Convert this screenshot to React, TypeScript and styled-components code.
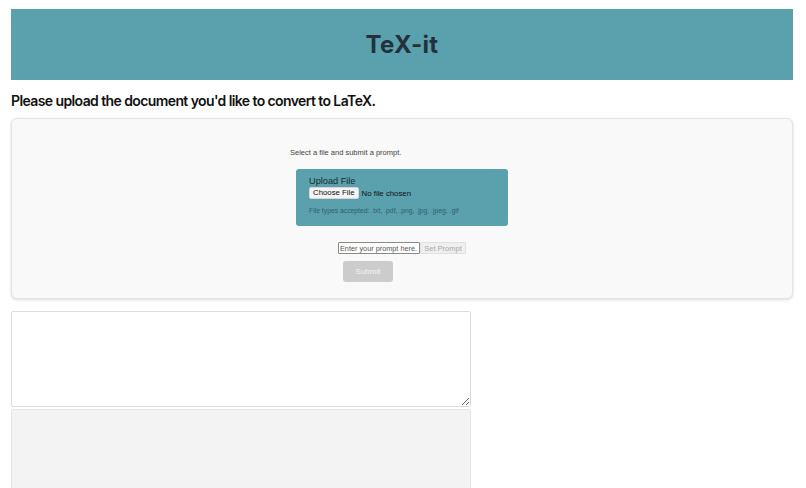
import React from 'react';
import styled, { createGlobalStyle } from 'styled-components';

const GlobalStyle = createGlobalStyle`
  html, body {
    margin: 0;
    padding: 0;
    overflow: hidden;
    background: #ffffff;
    font-family: Inter, "Liberation Sans", Arial, sans-serif;
  }
`;

const Page = styled.div`
  padding: 9px 13px 0 11px;
`;

const Header = styled.header`
  height: 71px;
  background-color: #5aa1ad;
  display: flex;
  align-items: center;
  justify-content: center;
`;

const Title = styled.h1`
  margin: 0;
  font-size: 24px;
  font-weight: 700;
  letter-spacing: 0.3px;
  color: #24313c;
`;

const Prompt = styled.h2`
  margin: 12px 0 8px;
  font-size: 14px;
  font-weight: 600;
  letter-spacing: -0.6px;
  line-height: 18px;
  color: #111111;
`;

const Card = styled.section`
  height: 181px;
  box-sizing: border-box;
  background: #f9f9f9;
  border: 1px solid #e3e3e3;
  border-radius: 6px;
  box-shadow: 0 1px 3px rgba(0, 0, 0, 0.14);
  display: flex;
  justify-content: center;
  padding-top: 29px;
`;

const Inner = styled.div`
  width: 224px;
  display: flex;
  flex-direction: column;
`;

const Hint = styled.p`
  margin: 0 0 11px;
  font-family: "Liberation Sans", Arial, sans-serif;
  font-size: 7.5px;
  line-height: 10px;
  color: #444444;
`;

const UploadBox = styled.div`
  margin: 0 6px;
  height: 57px;
  box-sizing: border-box;
  background: #5aa1ad;
  border-radius: 3px;
  padding: 7px 13px 0;
  font-family: "Liberation Sans", Arial, sans-serif;
`;

const UploadLabel = styled.label`
  display: block;
  font-size: 9.2px;
  line-height: 11px;
  color: #1b2a33;
`;

const FileRow = styled.div`
  display: flex;
  align-items: center;
  gap: 3px;
  font-size: 7.8px;
  color: #111111;
`;

const FakeButton = styled.span`
  display: inline-block;
  background: #f4f4f4;
  border: 1px solid #d6d6d6;
  border-radius: 2px;
  padding: 0 3px;
  font-size: 7.8px;
  line-height: 10px;
  color: #111111;
`;

const Accepted = styled.p`
  margin: 8px 0 0;
  font-size: 6.8px;
  line-height: 8px;
  color: #33606a;
`;

const PromptRow = styled.div`
  margin-top: 16px;
  display: flex;
  justify-content: center;
  align-items: center;
`;

const PromptInput = styled.input`
  width: 82px;
  height: 12px;
  box-sizing: border-box;
  padding: 0 1px;
  border: 1px solid #8a8a8a;
  border-radius: 1px;
  font-family: "Liberation Sans", Arial, sans-serif;
  font-size: 7.3px;
  color: #333;
  background: #ffffff;
  &::placeholder {
    color: #555555;
  }
`;

const SetButton = styled.button`
  height: 12px;
  width: 46px;
  box-sizing: border-box;
  padding: 0;
  border: 1px solid #e0e0e0;
  border-radius: 1px;
  background: #efefef;
  font-family: "Liberation Sans", Arial, sans-serif;
  font-size: 7.5px;
  color: #a9a9a9;
`;

const SubmitRow = styled.div`
  margin-top: 4px;
  padding-left: 53px;
`;

const SubmitButton = styled.button`
  width: 50px;
  height: 21px;
  border: none;
  border-radius: 3px;
  background: #cccccc;
  color: #f4f4f4;
  font-family: "Liberation Sans", Arial, sans-serif;
  font-size: 8px;
`;

const Editor = styled.textarea`
  display: block;
  margin-top: 12px;
  width: 460px;
  height: 96px;
  box-sizing: border-box;
  border: 1px solid #dcdcdc;
  border-radius: 2px;
  background: #ffffff;
  resize: vertical;
`;

const Output = styled.div`
  margin-top: 2px;
  width: 460px;
  height: 100px;
  box-sizing: border-box;
  border: 1px solid #e4e4e4;
  border-radius: 2px;
  background: #f3f3f3;
`;

export default function App() {
  return (
    <>
      <GlobalStyle />
      <Page>
        <Header>
          <Title>TeX-it</Title>
        </Header>
        <Prompt>Please upload the document you'd like to convert to LaTeX.</Prompt>
        <Card>
          <Inner>
            <Hint>Select a file and submit a prompt.</Hint>
            <UploadBox>
              <UploadLabel>Upload File</UploadLabel>
              <FileRow>
                <FakeButton>Choose File</FakeButton>
                <span>No file chosen</span>
              </FileRow>
              <Accepted>File types accepted: .txt, .pdf, .png, .jpg, .jpeg, .gif</Accepted>
            </UploadBox>
            <PromptRow>
              <PromptInput placeholder="Enter your prompt here." />
              <SetButton disabled>Set Prompt</SetButton>
            </PromptRow>
            <SubmitRow>
              <SubmitButton disabled>Submit</SubmitButton>
            </SubmitRow>
          </Inner>
        </Card>
        <Editor />
        <Output />
      </Page>
    </>
  );
}
